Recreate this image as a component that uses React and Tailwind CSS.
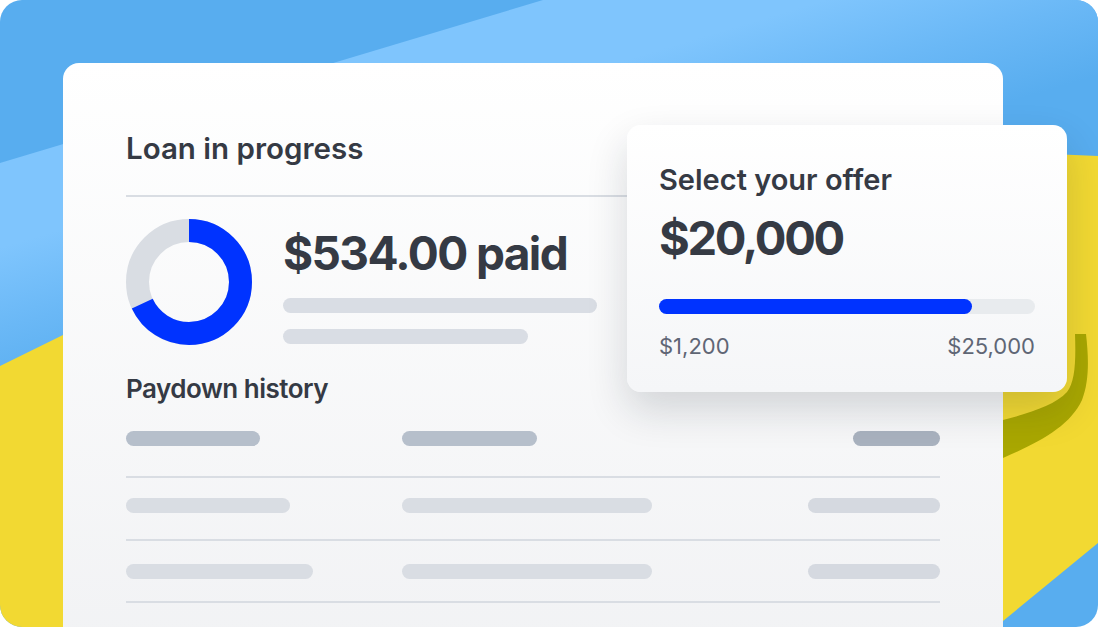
import React from "react"

const historyRows = [
  { cols: [134, 135, 87], head: true, pad: "pb-[30px]" },
  { cols: [164, 250, 132], pad: "pt-[20px] pb-[26px]" },
  { cols: [187, 250, 132], pad: "pt-[23px] pb-[22px]" },
]

const Backdrop = () => (
  <svg className="absolute inset-0" width="1098" height="627" viewBox="0 0 1098 627">
    <defs>
      <linearGradient id="band" gradientUnits="userSpaceOnUse" x1="0" y1="0" x2="124" y2="413">
        <stop offset="0.55" stopColor="#7fc5fd" />
        <stop offset="0.73" stopColor="#6ab8f6" />
        <stop offset="0.9" stopColor="#58adef" />
      </linearGradient>
    </defs>
    <rect width="1098" height="627" fill="#58adef" />
    <polygon points="543,0 1098,0 1098,200 0,520 0,163" fill="url(#band)" />
    <polygon points="0,366 63,335 500,130 1098,156 1098,543 1003,621 1003,627 0,627" fill="#f2d932" />
    <path
      d="M1003,420 C1030,413 1055,405 1067,392 C1075,382 1076,362 1075,334 L1086,334 C1089,360 1089,382 1082,400 C1070,426 1040,442 1003,458 Z"
      fill="#a9a700"
    />
  </svg>
)

const Donut = () => (
  <svg width="126" height="126" viewBox="0 0 126 126" className="shrink-0">
    <circle cx="63" cy="63" r="51.5" fill="none" stroke="#d9dde3" strokeWidth="23" />
    <circle
      cx="63"
      cy="63"
      r="51.5"
      fill="none"
      stroke="#0033ff"
      strokeWidth="23"
      strokeDasharray="220 400"
      transform="rotate(-90 63 63)"
    />
  </svg>
)

export default function App() {
  return (
    <div className="relative w-[1098px] h-[627px] overflow-hidden rounded-[22px] font-[Inter,sans-serif] text-[#353a44]">
      <Backdrop />

      <div className="relative pl-[63px] pt-[63px]">
        <div className="w-[940px] h-[600px] rounded-[16px] bg-gradient-to-b from-white to-[#f1f2f4] px-[63px] pt-[68px]">
          <h2 className="text-[29.5px] leading-[34px] font-semibold">Loan in progress</h2>
          <div className="mt-[30px] h-[2px] bg-[#d9dde3]" />

          <div className="mt-[22px] flex gap-[31px]">
            <Donut />
            <div className="pt-[11px]">
              <p className="text-[46px] leading-[46px] font-bold tracking-[-1.6px]">$534.00 paid</p>
              <div className="mt-[22px] h-[15px] w-[314px] rounded-full bg-[#d9dde4]" />
              <div className="mt-[16px] h-[15px] w-[245px] rounded-full bg-[#d9dde4]" />
            </div>
          </div>

          <h3 className="mt-[28px] text-[26px] leading-[32px] font-semibold tracking-[-0.5px]">Paydown history</h3>

          <div className="mt-[26px]">
            {historyRows.map((row, i) => (
              <div key={i} className={i > 0 ? "border-t-2 border-[#d9dde3]" : ""}>
                <div className={`grid grid-cols-[276px_1fr_auto] ${row.pad}`}>
                  <div
                    className={`h-[15px] rounded-full ${row.head ? "bg-[#b6bfcb]" : "bg-[#d9dde3]"}`}
                    style={{ width: row.cols[0] }}
                  />
                  <div
                    className={`h-[15px] rounded-full ${row.head ? "bg-[#b6bfcb]" : "bg-[#d9dde3]"}`}
                    style={{ width: row.cols[1] }}
                  />
                  <div
                    className={`h-[15px] rounded-full ${row.head ? "bg-[#a9b2bf]" : "bg-[#d5d9e0]"}`}
                    style={{ width: row.cols[2] }}
                  />
                </div>
              </div>
            ))}
            <div className="border-t-2 border-[#d9dde3]" />
          </div>
        </div>
      </div>

      <div className="absolute left-[627px] top-[125px] w-[440px] rounded-[14px] bg-gradient-to-b from-white to-[#f5f6f8] px-[32px] pt-[37px] pb-[32px] shadow-[0_18px_40px_rgba(20,28,45,0.16)]">
        <p className="text-[29px] leading-[36px] font-semibold">Select your offer</p>
        <p className="mt-[16px] text-[47px] leading-[48px] font-bold tracking-[-2.3px]">$20,000</p>
        <div className="mt-[37px] h-[15px] rounded-full bg-[#e8ebee]">
          <div className="h-full w-[313px] rounded-full bg-[#0033ff]" />
        </div>
        <div className="mt-[18px] flex justify-between text-[22px] leading-[28px] text-[#5f6675]">
          <span>$1,200</span>
          <span>$25,000</span>
        </div>
      </div>
    </div>
  )
}
